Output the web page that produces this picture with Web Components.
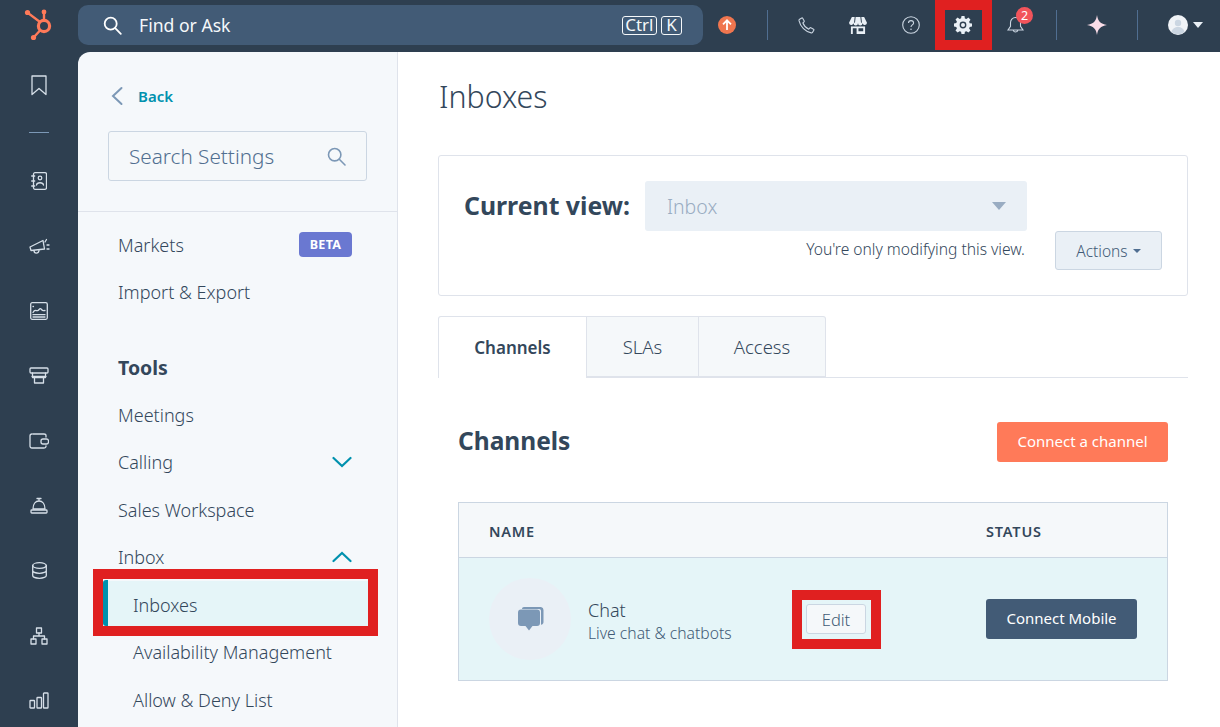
<!doctype html>
<html lang="en"><head><meta charset="utf-8"><title>Inboxes</title>
<style>
html,body{margin:0;height:727px;overflow:hidden}
body{font-family:"Noto Sans","Liberation Sans",sans-serif;color:#33475b;background:#2e3f50}
</style></head>
<body>
<hs-app>
  <hs-topbar slot="top"></hs-topbar>
  <hs-rail slot="rail"></hs-rail>
  <hs-settings-nav slot="nav">
    <hs-nav-item>Markets<hs-badge slot="end">BETA</hs-badge></hs-nav-item>
    <hs-nav-item>Import &amp; Export</hs-nav-item>
    <hs-nav-item kind="head">Tools</hs-nav-item>
    <hs-nav-item>Meetings</hs-nav-item>
    <hs-nav-item chevron="down">Calling</hs-nav-item>
    <hs-nav-item>Sales Workspace</hs-nav-item>
    <hs-nav-item chevron="up">Inbox</hs-nav-item>
    <hs-nav-item kind="sub" active>Inboxes</hs-nav-item>
    <hs-nav-item kind="sub">Availability Management</hs-nav-item>
    <hs-nav-item kind="sub">Allow &amp; Deny List</hs-nav-item>
  </hs-settings-nav>
  <hs-inboxes slot="main"></hs-inboxes>
</hs-app>
<script>
function def(name,css,html,extra){
  const C=class extends HTMLElement{
    constructor(){super();this.attachShadow({mode:'open'}).innerHTML='<style>'+css+'</style>'+(typeof html==='function'?html(this):html);}
    connectedCallback(){if(extra)extra(this);}
  };
  customElements.define(name,C);
}
const ic=(w,h,vb,body,extra='')=>`<svg width="${w}" height="${h}" viewBox="${vb}" fill="none" stroke="currentColor" ${extra}>${body}</svg>`;

def('hs-app',`
:host{display:grid;grid-template-columns:78px 320px 1fr;grid-template-rows:52px 675px;height:727px;width:1220px;background:#2e3f50}
::slotted([slot=top]){grid-column:1/4}
.nav{background:#f5f8fb;border-top-left-radius:12px;border-right:1px solid #dfe3eb;overflow:hidden;box-sizing:border-box}
.main{background:#fff;overflow:hidden}
`,`<slot name="top"></slot><slot name="rail"></slot><div class="nav"><slot name="nav"></slot></div><div class="main"><slot name="main"></slot></div>`);

def('hs-topbar',`
:host{display:flex;align-items:center;height:52px;color:#e6edf4;box-sizing:border-box;position:relative}
.logo{width:78px;flex:none;display:flex;justify-content:center;margin-top:-4px}
.search{width:625px;flex:none;height:40px;margin-top:-2px;background:#425b76;border-radius:10px;display:flex;align-items:center;box-sizing:border-box;padding:0 21px 0 25px;color:#f5f8fa;font-size:17.600px}
.search .t{margin-left:17px;flex:1}
.keys{display:flex;gap:4px}
.key{border:1.500px solid #f5f8fa;border-radius:3px;font-size:17px;line-height:16px;padding:0 2.500px;box-sizing:border-box;height:19px;display:flex;align-items:center;min-width:21px;justify-content:center}
.slot{display:flex;flex:none;justify-content:center;align-items:center;margin-top:-2px;height:40px;position:relative}
.div{width:1px;flex:none;height:30px;background:#506e91;margin-top:-2px}
.badge{position:absolute;top:2px;left:41px;width:17px;height:17px;border-radius:50%;background:#f2545b;color:#fff;font-size:12.500px;display:flex;align-items:center;justify-content:center}
.red{position:absolute;left:935px;top:0;width:37px;height:30px;border:10px solid #e02020}
`,`
<div class="logo">
 <svg width="32" height="34" viewBox="0 0 32 34" fill="none" stroke="#ff7a59" stroke-linecap="round">
  <circle cx="21" cy="19" r="5.600" stroke-width="3.200"/>
  <path d="M21 13V6" stroke-width="2.400"/><circle cx="21" cy="5" r="2.400" fill="#ff7a59" stroke="none"/>
  <path d="M17 15 5 6" stroke-width="2.200"/><circle cx="4.500" cy="5.500" r="2.600" fill="#ff7a59" stroke="none"/>
  <path d="M17 23.500 11 30" stroke-width="2.400"/><circle cx="10.500" cy="30.500" r="2.600" fill="#ff7a59" stroke="none"/>
 </svg>
</div>
<div class="search">
 <svg width="19" height="19" viewBox="0 0 19 19" fill="none" stroke="#fff" stroke-width="1.800" stroke-linecap="round"><circle cx="7.700" cy="7.700" r="6"/><path d="m12.200 12.200 5.600 5.600"/></svg>
 <span class="t">Find or Ask</span>
 <span class="keys"><span class="key">Ctrl</span><span class="key">K</span></span>
</div>
<div class="slot" style="width:48px">
 <svg width="18" height="18" viewBox="0 0 18 18"><circle cx="9" cy="9" r="9" fill="#f0764f"/><path d="M9 14V4.500M5 8.300 9 4.300l4 4" fill="none" stroke="#fff" stroke-width="1.800"/></svg>
</div>
<div class="slot" style="width:16px"></div>
<div class="div"></div>
<div class="slot" style="width:77px">
 <svg width="17" height="17" viewBox="0 0 17 17" fill="none" stroke="#cbd6e2" stroke-width="1.100"><path d="M1.600 2.200 3.800 1c.4-.2.700 0 .9.300l1.500 2.600c.2.400.1.700-.2 1L4.900 6c1 2.700 3 4.800 5.900 6.200l1.100-1.200c.3-.3.700-.4 1-.2l2.700 1.500c.4.200.4.600.2.900l-1.200 2.100c-.3.500-.8.700-1.400.6C7.500 14.900 2.300 9.800 1 3.700c-.1-.6.100-1.200.6-1.500Z"/></svg>
</div>
<div class="slot" style="width:25px">
 <svg width="18" height="17" viewBox="0 0 19 18"><path d="M3 0h13l3 6a2.400 2.400 0 0 1-4.700.7 2.400 2.400 0 0 1-4.800 0 2.400 2.400 0 0 1-4.800 0A2.400 2.400 0 0 1 0 6Z" fill="#eaf0f6"/><path d="M6.500 0 5.800 6M12.500 0l.7 6" stroke="#2e3f50" stroke-width="1"/><path d="M2 10h15v8H2Z" fill="#eaf0f6"/><path d="M4 12h4v6H4ZM10 12h5v3h-5Z" fill="#2e3f50"/></svg>
</div>
<div class="slot" style="width:81px">
 <svg width="18" height="18" viewBox="0 0 18 18" fill="none" stroke="#cbd6e2" stroke-width="1.100"><circle cx="9" cy="9" r="8.300"/><path d="M6.500 7.100C6.500 5.600 7.600 4.600 9 4.600s2.600 1 2.600 2.400c0 1.900-2.600 2-2.600 4"/><circle cx="9" cy="13.200" r=".8" fill="#cbd6e2" stroke="none"/></svg>
</div>
<div class="slot" style="width:24px">
 <svg width="18" height="18" viewBox="0 0 18 18"><path fill="#eaf0f6" fill-rule="evenodd" d="M7.500 0h3l.4 2.400 1.500.6 2-1.400 2.100 2.100-1.400 2 .6 1.500 2.300.4v3l-2.300.4-.6 1.500 1.400 2-2.100 2.100-2-1.400-1.500.6-.4 2.300h-3l-.4-2.300-1.500-.6-2 1.400-2.100-2.100 1.400-2-.6-1.500L0 10.500v-3l2.300-.4.600-1.500-1.400-2 2.100-2.100 2 1.400 1.500-.6ZM9 5.600a3.400 3.400 0 1 0 0 6.800 3.400 3.400 0 0 0 0-6.800Z"/><circle cx="9" cy="9" r="2" fill="#eaf0f6"/></svg>
</div>
<div class="slot" style="width:81px">
 <svg width="17" height="19" viewBox="0 0 17 19" fill="none" stroke="#cbd6e2" stroke-width="1.100"><path d="M8.500 1.500c-3 0-5 2.300-5 5.200v3.700L1 14h15l-2.500-3.600V6.700c0-2.900-2-5.200-5-5.200ZM6.300 14.300a2.300 2.300 0 0 0 4.400 0"/></svg>
 <span class="badge">2</span>
</div>
<div class="div"></div>
<div class="slot" style="width:80px">
 <svg width="20" height="20" viewBox="0 0 20 20"><path d="M10 0c.8 6 3.500 9 10 10-6.500 1-9.200 4-10 10-.8-6-3.500-9-10-10C6.500 9 9.200 6 10 0Z" fill="#fbdde8"/></svg>
</div>
<div class="div"></div>
<div class="slot" style="width:82px;gap:5px;justify-content:flex-start;padding-left:30px;box-sizing:border-box">
 <svg width="20" height="20" viewBox="0 0 20 20"><circle cx="10" cy="10" r="10" fill="#f0f3f7"/><circle cx="10" cy="8" r="3.200" fill="#cbd6e2"/><path d="M3.500 17c.7-3.500 3.400-5 6.500-5s5.800 1.500 6.500 5a10 10 0 0 1-13 0Z" fill="#cbd6e2"/></svg>
 <svg width="10" height="6" viewBox="0 0 10 6"><path d="M0 0h10L5 6Z" fill="#eaf0f6"/></svg>
</div>
<div class="red"></div>
`);

def('hs-rail',`
:host{display:flex;flex-direction:column;align-items:center;color:#d6dfe8;padding-top:1px;overflow:hidden;height:675px;box-sizing:border-box}
.i{height:65px;width:100%;flex:none;display:flex;align-items:center;justify-content:center}
.l{height:0;width:20px;flex:none;border-top:1px solid #7c98b6;margin:31px 0 15px}
.b{height:32px;flex:none;display:flex;align-items:center;justify-content:center;width:100%;margin-top:16px;margin-bottom:0}
svg{stroke-width:1.300;stroke-linejoin:round;stroke-linecap:round}
`,()=>{
 const s=(w,h,b)=>`<div class="i">${ic(w,h,`0 0 ${w} ${h}`,b)}</div>`;
 return `<div class="b">${ic(16,21,'0 0 16 21','<path d="M1 1h14v18.500L8 13.500 1 19.500Z"/>')}</div>
 <div class="l"></div>`
 +s(16,18,'<rect x="2.500" y=".7" width="13" height="16.600" rx="1.500"/><circle cx="9" cy="6" r="1.800"/><path d="M5.500 13c.5-3 6.500-3 7 0M.7 4h3M.7 9h3M.7 14h3"/>')
 +s(21,16,'<path d="M1 9 14 2.500 15.500 11 2 12.500Z"/><path d="M5 12.500c0 3.500 4.500 3.500 5 0"/><path d="m16 4 1.500-2.500M18 7h2M18 11h2"/>')
 +s(18,18,'<rect x=".7" y=".7" width="16.600" height="16.600" rx="1.500"/><path d="M3 4.500h.5M3 10.500c2-4 3.500-1 5-2s2-3 3.500-1 2 1 3.500 1M3 12.700h12M3 15h12"/>')
 +s(20,17,'<rect x="1" y="1" width="18" height="5" rx="1"/><path d="M3 9.500h14M3.500 6v4.500h13V6M5.500 10.500v5.500h9v-5.500"/>')
 +s(20,17,'<path d="M17 5V3.500C17 2.500 16.300 2 15 2H4M17 14v.5c0 1-.7 1.500-2 1.500H3c-1.200 0-2-.8-2-2V4c0-1.200.8-2 2-2"/><rect x="12" y="7" width="7.500" height="5" rx="2"/>')
 +s(18,17,'<path d="M9 4C5.500 4 3 7 3 12h12c0-5-2.500-8-6-8ZM9 4V2M7 1.500h4"/><rect x="1" y="13" width="16" height="3" rx=".8"/>')
 +s(15,17,'<ellipse cx="7.500" cy="3.500" rx="6.800" ry="2.800"/><path d="M.7 3.500v10c0 1.500 3 2.800 6.800 2.800s6.800-1.300 6.800-2.800v-10M.7 8.500c0 1.500 3 2.800 6.800 2.800s6.800-1.300 6.800-2.800"/>')
 +s(18,18,'<rect x="6.500" y="1" width="5" height="5"/><rect x="1" y="12" width="5" height="5"/><rect x="12" y="12" width="5" height="5"/><path d="M9 6v3M3.500 12V9h11v3"/>')
 +s(20,17,'<rect x="1" y="8.500" width="4.500" height="7.500" rx=".6"/><rect x="8" y="5.500" width="4.500" height="10.500" rx=".6"/><rect x="14.500" y="1" width="4.500" height="15" rx=".6"/>');
});

def('hs-badge',`:host{display:inline-flex;align-items:center;justify-content:center;width:53px;height:25px;border-radius:4px;background:#6a78d1;color:#fff;font-size:12.500px;font-weight:700;letter-spacing:.3px}`,`<slot></slot>`);

def('hs-settings-nav',`
:host{display:block;height:675px}
.back{display:flex;align-items:center;height:44px;margin-top:22px;padding-left:33px;gap:15px;color:#0091ae;font-weight:600;font-size:15px}
.box{margin:13px 30px 0 30px;height:50px;width:259px;box-sizing:border-box;border:1px solid #cbd6e2;border-radius:3px;background:#f5f8fa;display:flex;align-items:center;justify-content:space-between;padding:0 20px 0 20px;font-size:20.700px;font-weight:300;color:#516f90}
hr{border:0;border-top:1px solid #dfe3eb;margin:30px 0 0}
.list{padding-top:9px}
`,`
<div class="back"><svg width="12" height="20" viewBox="0 0 12 20" fill="none" stroke="#7c98b6" stroke-width="2" stroke-linecap="round"><path d="M10.500 2 2 10l8.500 8"/></svg><span>Back</span></div>
<div class="box"><span>Search Settings</span><svg width="19" height="19" viewBox="0 0 19 19" fill="none" stroke="#7c98b6" stroke-width="1.600" stroke-linecap="round"><circle cx="7.700" cy="7.700" r="6.200"/><path d="m12.300 12.300 5.700 5.700"/></svg></div>
<hr>
<div class="list"><slot></slot></div>`);

def('hs-nav-item',`
:host{display:flex;align-items:center;height:47.500px;padding:0 45px 0 40px;font-size:18px;font-weight:300;color:#33475b;position:relative;box-sizing:border-box;justify-content:space-between}
:host([kind=head]){font-weight:700;font-size:19.500px;color:#33475b;margin-top:27.500px}
:host([kind=sub]){padding-left:55px}
:host([active]){background:#e5f5f8;margin:0 19px 0 25px;padding-left:30px;height:47.500px;color:#33475b}
:host([active])::before{content:"";position:absolute;left:0;top:-1px;bottom:3px;width:5px;background:#0091ae;border-radius:3px 0 0 3px}
:host([active])::after{content:"";position:absolute;left:-10px;right:0;top:-12px;height:47px;border:10px solid #e02020;pointer-events:none}
svg{color:#0091ae}
`,(el)=>{
 const c=el.getAttribute('chevron');
 const p=c==='down'?'M1.500 2 10 10l8.500-8':'M1.500 10 10 2l8.500 8';
 return `<slot></slot><slot name="end">${c?`<svg width="20" height="12" viewBox="0 0 20 12" fill="none" stroke="currentColor" stroke-width="2.200" stroke-linecap="round"><path d="${p}"/></svg>`:''}</slot>`;
});

def('hs-btn',`
:host{display:inline-flex;align-items:center;justify-content:center;box-sizing:border-box;border-radius:3px;font-size:15px;position:relative;flex:none}
:host([kind=primary]){background:#ff7a59;color:#fff;width:171px;height:40px;padding-bottom:2px}
:host([kind=dark]){background:#425b76;color:#fff;width:151px;height:40px;padding-bottom:2px}
:host([kind=sec]){background:#eaf0f6;color:#425b76;border:1px solid #cbd6e2;width:107px;height:39px;gap:5px;margin-top:50px;font-weight:300;font-size:15.500px}
:host([kind=edit]){background:#f5f8fa;color:#425b76;border:1px solid #cbd6e2;width:60px;height:30px;font-size:16.500px;font-weight:300}
:host([kind=edit])::after{content:"";position:absolute;left:-15px;right:-16px;top:-15px;bottom:-16px;border:10px solid #e02020;pointer-events:none}
`,`<slot></slot>`);

def('hs-view-card',`
:host{display:flex;box-sizing:border-box;height:141px;border:1px solid #dfe3eb;border-radius:3px;padding:25px 25px 0 25px;margin-top:38px}
b{font-size:24.800px;color:#33475b;font-weight:700;margin-right:15px;white-space:nowrap;line-height:50px;margin-top:-1px}
.col{width:382px;margin-right:28px;flex:none}
.sel{height:50px;border-radius:3px;background:#eaf0f6;display:flex;align-items:center;justify-content:space-between;padding:0 21px 0 22px;color:#99acc2;font-size:19.500px;font-weight:300}
.hint{text-align:right;font-size:15.600px;font-weight:300;color:#33475b;margin:9px 2px 0 0;line-height:18px;white-space:nowrap}
i{display:block;width:0;height:0;border:7px solid transparent;border-top:8px solid #99acc2;border-bottom:0}
u{display:block;width:0;height:0;border:4px solid transparent;border-top:4px solid #506e91;border-bottom:0}
`,`<b>Current view:</b><div class="col"><div class="sel"><span>Inbox</span><i></i></div><div class="hint">You're only modifying this view.</div></div><hs-btn kind="sec">Actions <u></u></hs-btn>`);

def('hs-tabs',`
:host{display:flex;height:62px;margin-top:20px;border-bottom:1px solid #dfe3eb;box-sizing:border-box;font-size:18.500px;font-weight:300;color:#33475b}
.t{display:flex;align-items:center;justify-content:center;background:#f5f8fa;border:1px solid #dfe3eb;border-left:0;height:61px;box-sizing:border-box}
.on{background:#fff;border-left:1px solid #dfe3eb;font-weight:600;font-size:17px;height:62px;border-bottom:0;border-top-left-radius:3px;width:149px}
.l{border-top-right-radius:3px}
`,`<div class="t on">Channels</div><div class="t" style="width:112px">SLAs</div><div class="t l" style="width:127px">Access</div>`);

def('hs-channel-table',`
:host{display:block;border:1px solid #cbd6e2;height:179px;box-sizing:border-box;margin-top:40px}
.h{height:55px;background:#f5f8fa;border-bottom:1px solid #cbd6e2;display:flex;align-items:center;font-size:14.500px;font-weight:600;color:#33475b;letter-spacing:.8px;padding:2px 0 0 30px;box-sizing:border-box}
.h span:first-child{width:497px}
.r{height:122px;background:#e5f5f8;display:flex;align-items:center;padding-left:30px;box-sizing:border-box}
.c{width:82px;height:82px;border-radius:50%;background:#eaf0f6;display:flex;align-items:center;justify-content:center;margin-right:17px;flex:none}
.tx{width:218px;flex:none;margin-top:4px}
.n{font-size:18px;font-weight:300;color:#33475b;line-height:22px}
.s{font-size:15.700px;font-weight:300;color:#425b76;line-height:20px;margin-top:2px;white-space:nowrap}
`,`<div class="h"><span>NAME</span><span>STATUS</span></div>
<div class="r"><div class="c"><svg width="27" height="27" viewBox="0 0 27 27"><path d="M7 1h17a3 3 0 0 1 2.500 3v12c0 1.500-.8 2.500-2.500 2.800V5c0-1.200-.8-2-2-2H5C5 1.800 5.800 1 7 1Z" fill="#7c98b6"/><path d="M4 4.500h16c2 0 3 1 3 3V18c0 2-1 3-3 3h-4.500L12 25.500 8.500 21H4c-2 0-3-1-3-3V7.500c0-2 1-3 3-3Z" fill="#7c98b6" transform="translate(0 -1)"/></svg></div>
<div class="tx"><div class="n">Chat</div><div class="s">Live chat &amp; chatbots</div></div>
<hs-btn kind="edit" style="margin-right:120px">Edit</hs-btn><hs-btn kind="dark">Connect Mobile</hs-btn></div>`);

def('hs-inboxes',`
:host{display:block;padding:0 32px 0 40px;height:675px;box-sizing:border-box}
h1{font-size:30.300px;font-weight:300;color:#33475b;margin:0 0 0 1px;line-height:40px;padding-top:25px;height:40px}
section{padding:0 20px}
.row{display:flex;justify-content:space-between;align-items:center;margin-top:44px;height:40px}
h2{margin:-4px 0 0;font-size:24.500px;font-weight:700;color:#33475b}
`,`<h1>Inboxes</h1><hs-view-card></hs-view-card><hs-tabs></hs-tabs><section><div class="row"><h2>Channels</h2><hs-btn kind="primary">Connect a channel</hs-btn></div><hs-channel-table></hs-channel-table></section>`);
</script>
</body></html>
